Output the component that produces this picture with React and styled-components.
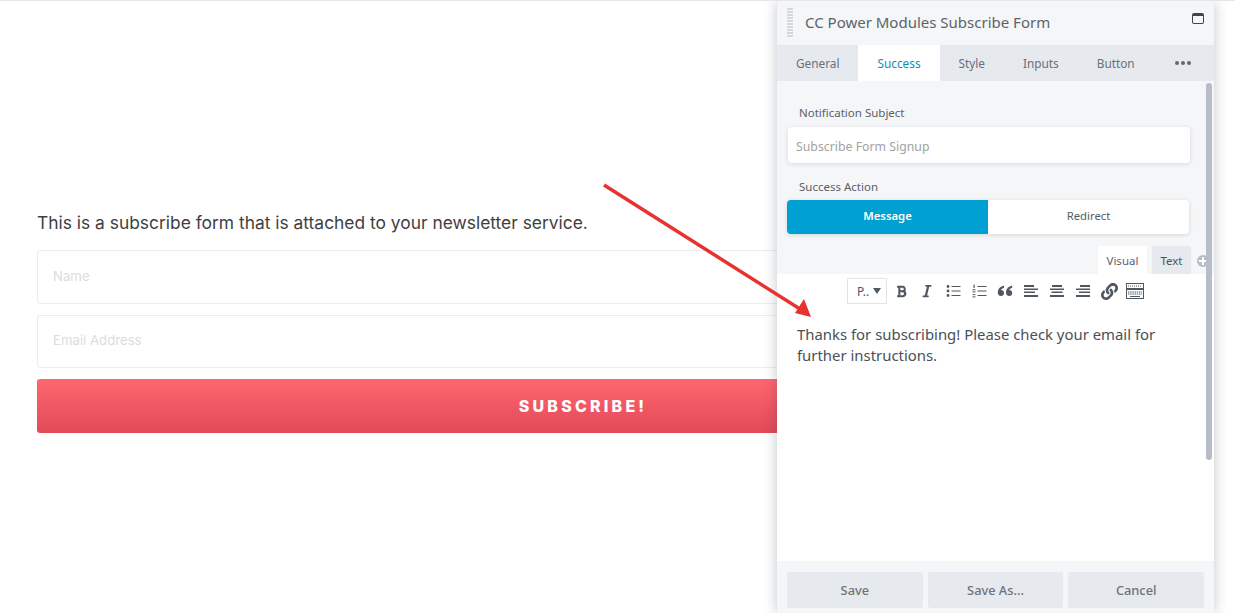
import * as React from 'react';
import styled, { createGlobalStyle } from 'styled-components';
import { FaBold, FaItalic, FaLink } from 'react-icons/fa';

const GlobalStyle = createGlobalStyle`
  html, body {
    margin: 0;
    height: 100%;
    background: #fff;
    overflow: hidden;
  }
`;

const TABS = ['General', 'Success', 'Style', 'Inputs', 'Button'];

const BulletList = () => (
  <svg width="15" height="14" viewBox="0 0 15 14" fill="#4f5862">
    <circle cx="2" cy="2.500" r="1.400" />
    <circle cx="2" cy="7" r="1.400" />
    <circle cx="2" cy="11.500" r="1.400" />
    <rect x="5.500" y="2" width="9" height="1" />
    <rect x="5.500" y="6.500" width="9" height="1" />
    <rect x="5.500" y="11" width="9" height="1" />
  </svg>
);

const NumberList = () => (
  <svg width="15" height="14" viewBox="0 0 15 14" fill="#4f5862">
    <rect x="1.500" y="0.500" width="1.200" height="3.500" />
    <rect x="0.500" y="5.200" width="3" height="1" />
    <rect x="0.500" y="7.400" width="3" height="1" />
    <rect x="0.500" y="10.200" width="3" height="0.900" />
    <rect x="0.500" y="12.400" width="3" height="1" />
    <rect x="5.500" y="2" width="9" height="1" />
    <rect x="5.500" y="6.500" width="9" height="1" />
    <rect x="5.500" y="11" width="9" height="1" />
  </svg>
);

const Quote = () => (
  <svg width="16" height="14" viewBox="0 0 16 14" fill="#4f5862">
    <path d="M7 1.500C3.500 2.500 1 4.500.8 8c-.1 2.500 1.200 4 3.200 4s3-1.300 3-3-1.200-3-3-3c.4-1 1.500-1.800 3-2.300z" />
    <path d="M15.200 1.500c-3.500 1-6 3-6.200 6.500-.1 2.500 1.200 4 3.200 4s3-1.300 3-3-1.200-3-3-3c.4-1 1.500-1.800 3-2.300z" />
  </svg>
);

const AlignIcon = ({ side }) => {
  const short = side === 'left' ? 0 : side === 'center' ? 2 : 4;
  const tiny = side === 'left' ? 0 : side === 'center' ? 1.500 : 3;
  return (
    <svg width="14" height="14" viewBox="0 0 14 14" fill="#4f5862">
      <rect x={short} y="1" width="10" height="2" />
      <rect x="0" y="4.500" width="14" height="1.500" />
      <rect x={tiny} y="7.500" width="11" height="1.500" />
      <rect x="0" y="11" width="14" height="2" />
    </svg>
  );
};

const KitchenSink = () => (
  <svg width="18" height="16" viewBox="0 0 18 16" fill="none" stroke="#4f5862">
    <rect x="0.500" y="0.500" width="17" height="5" />
    <path d="M2 3h14" strokeDasharray="1 1" />
    <rect x="0.500" y="6.500" width="17" height="9" />
    <path d="M2 9h14M2 11h14" strokeDasharray="1.500 .7" />
    <path d="M4 13.500h10" />
  </svg>
);

const App = () => {
  return (
    <Page>
      <GlobalStyle />
      <Form>
        <Intro>This is a subscribe form that is attached to your newsletter service.</Intro>
        <FormInput placeholder="Name" readOnly />
        <FormInput placeholder="Email Address" readOnly />
        <SubmitButton>SUBSCRIBE!</SubmitButton>
      </Form>

      <Window>
        <TitleBar>
          <DragHandle />
          <Title>CC Power Modules Subscribe Form</Title>
          <MaximizeIcon />
        </TitleBar>

        <TabBar>
          {TABS.map((tab) => (
            <Tab key={tab} $active={tab === 'Success'}>{tab}</Tab>
          ))}
          <MoreDots>
            <span /><span /><span />
          </MoreDots>
        </TabBar>

        <Content>
          <Scrollbar />
          <FieldLabel>Notification Subject</FieldLabel>
          <TextField placeholder="Subscribe Form Signup" readOnly />
          <ActionLabel>Success Action</ActionLabel>
          <Toggle>
            <ToggleButton $active>Message</ToggleButton>
            <ToggleButton>Redirect</ToggleButton>
          </Toggle>

          <EditorTabs>
            <EditorTab $active>Visual</EditorTab>
            <EditorTab>Text</EditorTab>
            <AddCircle />
          </EditorTabs>

          <Editor>
            <Toolbar>
              <FormatSelect>
                P..
                <Caret />
              </FormatSelect>
              <ToolIcon><FaBold size={13} /></ToolIcon>
              <ToolIcon><FaItalic size={14} /></ToolIcon>
              <ToolIcon><BulletList /></ToolIcon>
              <ToolIcon><NumberList /></ToolIcon>
              <ToolIcon><Quote /></ToolIcon>
              <ToolIcon><AlignIcon side="left" /></ToolIcon>
              <ToolIcon><AlignIcon side="center" /></ToolIcon>
              <ToolIcon><AlignIcon side="right" /></ToolIcon>
              <ToolIcon><FaLink size={17} /></ToolIcon>
              <ToolIcon><KitchenSink /></ToolIcon>
            </Toolbar>
            <EditorText>
              Thanks for subscribing! Please check your email for further instructions.
            </EditorText>
          </Editor>
        </Content>

        <Footer>
          <FooterButton>Save</FooterButton>
          <FooterButton>Save As...</FooterButton>
          <FooterButton>Cancel</FooterButton>
        </Footer>
      </Window>

      <Arrow width="1235" height="613" viewBox="0 0 1235 613">
        <line x1="604" y1="185" x2="800" y2="309" stroke="#e8322f" strokeWidth="3.500" />
        <polygon points="811,317 795,313 804,299" fill="#e8322f" />
      </Arrow>
    </Page>
  );
};

export default App;

const Page = styled.div`
  position: relative;
  height: 613px;
  box-sizing: border-box;
  padding-top: 212px;
  border-top: 1px solid #e6e6e8;
  overflow: hidden;
`;

const Form = styled.div`
  width: 1092px;
  margin-left: 37px;
  display: flex;
  flex-direction: column;
  font-family: "Inter", sans-serif;
`;

const Intro = styled.p`
  margin: 0 0 17px;
  font-size: 17.400px;
  line-height: 20px;
  color: #3f3f41;
`;

const FormInput = styled.input`
  height: 53.500px;
  box-sizing: border-box;
  margin-bottom: 11px;
  padding: 0 15px 2px;
  border: 1px solid #ececf0;
  border-radius: 3px;
  outline: none;
  font-family: inherit;
  font-size: 13.200px;

  &::placeholder {
    color: #dcdcdf;
  }
`;

const SubmitButton = styled.button`
  height: 54px;
  border: 0;
  border-radius: 3px;
  background: linear-gradient(#ff6670, #e24a58);
  color: #fff;
  font-family: "Inter", sans-serif;
  font-size: 16px;
  font-weight: 800;
  letter-spacing: 3.200px;
`;

const Window = styled.div`
  position: absolute;
  top: 0;
  left: 777px;
  width: 437px;
  height: 612px;
  display: flex;
  flex-direction: column;
  border-radius: 4px 4px 0 0;
  background: #f5f6f8;
  box-shadow: 0 0 14px rgba(40, 50, 70, 0.28);
  font-family: "Noto Sans", sans-serif;
`;

const TitleBar = styled.div`
  height: 44px;
  display: flex;
  align-items: center;
  padding: 0 10px;
`;

const DragHandle = styled.div`
  width: 6px;
  height: 30px;
  margin-right: 12px;
  background: repeating-linear-gradient(#d4d8de 0 2px, transparent 2px 3px);
`;

const Title = styled.div`
  flex: 1;
  margin-bottom: 2px;
  font-size: 15px;
  color: #5c636b;
`;

const MaximizeIcon = styled.div`
  width: 12px;
  height: 11px;
  margin-bottom: 10px;
  border: 1px solid #3f464e;
  border-top-width: 3px;
  border-radius: 2px;
  box-sizing: border-box;
`;

const TabBar = styled.div`
  height: 36px;
  display: flex;
  align-items: stretch;
  background: #e6e9ee;
`;

const Tab = styled.div`
  display: flex;
  align-items: center;
  padding: 0 19px;
  font-size: 11.800px;
  color: ${(props) => (props.$active ? '#0e8fb8' : '#68707a')};
  background: ${(props) => (props.$active ? '#fff' : 'transparent')};
`;

const MoreDots = styled.div`
  display: flex;
  align-items: center;
  gap: 2px;
  margin-left: 21px;

  span {
    width: 4px;
    height: 4px;
    border-radius: 50%;
    background: #5f6872;
  }
`;

const Content = styled.div`
  position: relative;
  flex: 1;
  display: flex;
  flex-direction: column;
  min-height: 0;
`;

const Scrollbar = styled.div`
  position: absolute;
  top: 2px;
  right: 2px;
  width: 6px;
  height: 377px;
  border-radius: 3px;
  background: #b6bdc8;
  z-index: 2;
`;

const FieldLabel = styled.label`
  margin: 23px 0 6px 22px;
  font-size: 11.500px;
  line-height: 17px;
  color: #5a6068;
`;

const ActionLabel = styled(FieldLabel)`
  margin: 0 0 5px 22px;
`;

const TextField = styled.input`
  width: 402px;
  height: 36px;
  box-sizing: border-box;
  margin: 0 0 15px 11px;
  padding: 3px 8px 0;
  border: 0;
  border-radius: 4px;
  outline: none;
  background: #fff;
  box-shadow: 0 1px 4px rgba(40, 50, 70, 0.16);
  font-family: inherit;
  font-size: 12.300px;

  &::placeholder {
    color: #a2a2a2;
  }
`;

const Toggle = styled.div`
  width: 402px;
  height: 34px;
  display: flex;
  margin-left: 10px;
  border-radius: 4px;
  overflow: hidden;
  box-shadow: 0 1px 4px rgba(40, 50, 70, 0.16);
`;

const ToggleButton = styled.div`
  flex: 1;
  display: flex;
  align-items: center;
  justify-content: center;
  padding-bottom: 3px;
  font-size: 11.300px;
  font-weight: ${(props) => (props.$active ? 600 : 400)};
  color: ${(props) => (props.$active ? '#fff' : '#555c64')};
  background: ${(props) => (props.$active ? '#00a0d2' : '#fff')};
`;

const EditorTabs = styled.div`
  height: 28px;
  margin-top: 12px;
  display: flex;
  justify-content: flex-end;
  align-items: stretch;
  gap: 5px;
  padding-right: 23px;
  position: relative;
`;

const EditorTab = styled.div`
  display: flex;
  align-items: center;
  padding: 0 8.500px;
  font-size: 11.500px;
  color: ${(props) => (props.$active ? '#5c636b' : '#4a5560')};
  background: ${(props) => (props.$active ? '#fff' : '#e6e9ee')};
`;

const AddCircle = styled.span`
  position: absolute;
  top: 9px;
  right: 5px;
  width: 12px;
  height: 12px;
  border-radius: 50%;
  background:
    linear-gradient(#fff, #fff) center / 8px 2px no-repeat,
    linear-gradient(#fff, #fff) center / 2px 8px no-repeat,
    #b6bdc8;
`;

const Editor = styled.div`
  flex: 1;
  background: #fff;
  min-height: 0;
`;

const Toolbar = styled.div`
  height: 26px;
  margin-top: 4px;
  padding-left: 70px;
  display: flex;
  align-items: center;
`;

const FormatSelect = styled.div`
  width: 40px;
  height: 26px;
  box-sizing: border-box;
  margin-right: 1px;
  display: flex;
  align-items: center;
  gap: 4px;
  padding-left: 9px;
  border: 1px solid #e2e4e7;
  font-size: 12px;
  color: #4f565e;
`;

const Caret = styled.span`
  width: 0;
  height: 0;
  border-left: 4px solid transparent;
  border-right: 4px solid transparent;
  border-top: 6px solid #4f5862;
`;

const ToolIcon = styled.div`
  width: 26px;
  display: flex;
  justify-content: center;
  color: #4f5862;
`;

const EditorText = styled.div`
  margin-top: 20px;
  padding: 0 20px;
  font-size: 14.900px;
  line-height: 21px;
  color: #4a5056;
`;

const Footer = styled.div`
  height: 52px;
  box-sizing: border-box;
  padding: 11px 10px 5px;
  display: flex;
  gap: 5px;
`;

const FooterButton = styled.div`
  flex: 1;
  display: flex;
  align-items: center;
  justify-content: center;
  border-radius: 3px;
  background: #e6e9ee;
  font-size: 12.800px;
  font-weight: 500;
  color: #6b737c;
`;

const Arrow = styled.svg`
  position: absolute;
  top: -1px;
  left: 0;
  pointer-events: none;
`;
